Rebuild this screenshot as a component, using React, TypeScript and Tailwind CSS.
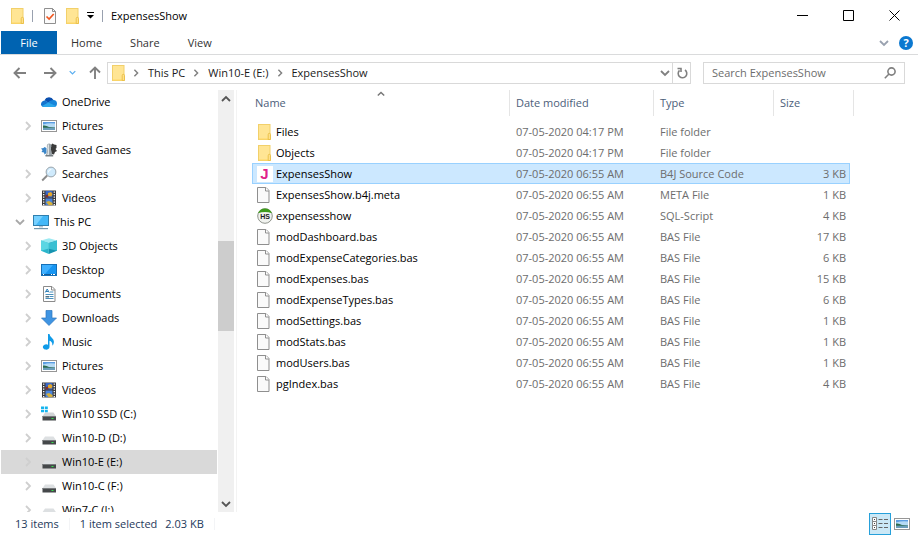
import { Fragment, useState } from "react";
import type { ReactNode } from "react";
import clsx from "clsx";

/* ---------- Icons ---------- */

const FolderIcon = () => (
  <svg viewBox="0 0 14 16" className="h-4 w-3.5 shrink-0">
    <rect x="1.500" y=".5" width="11.500" height="15" fill="#ffe594" stroke="#f2d06a" />
    <path d="M2 15h10" stroke="#ffd766" />
    <path d="M11.200 15.500v-5a1.100 1.100 0 0 1 2.300 0v5z" fill="#ffe08a" stroke="#e9be45" strokeWidth=".9" />
  </svg>
);

const FileIcon = () => (
  <svg viewBox="0 0 16 16" className="h-4 w-4 shrink-0">
    <path d="M.5.5h8.500l3 3v12H.5z" fill="#fafafa" stroke="#8f8f8f" />
    <path d="M8.500 .5v3.500H12" fill="#fff" stroke="#8f8f8f" />
  </svg>
);

const PropertiesIcon = () => (
  <svg viewBox="0 0 16 16" className="h-4 w-4 shrink-0">
    <path d="M3.500 .5h8l3 3v12h-11z" fill="#fbfbfb" stroke="#8f8f8f" />
    <path d="M11.500 .5v3h3" fill="none" stroke="#8f8f8f" />
    <path d="M5.500 8.500l2.600 2.500 4.600-5" fill="none" stroke="#f0561f" strokeWidth="1.700" />
  </svg>
);

const B4JIcon = () => (
  <svg viewBox="0 0 16 16" className="h-4 w-4 shrink-0">
    <rect width="16" height="16" fill="#fff" />
    <text x="7.500" y="13" textAnchor="middle" fontSize="15" fontWeight="700" fontFamily="Liberation Sans, sans-serif" fill="#e0218a">
      J
    </text>
  </svg>
);

const HeidiIcon = () => (
  <svg viewBox="0 0 16 16" className="h-4 w-4 shrink-0">
    <circle cx="8" cy="8" r="7.300" fill="#f1f3ef" stroke="#8f938c" />
    <path d="M1 5.200a7.500 7.500 0 0 1 14 0q-7-2.500-14 0z" fill="#3e9b1c" />
    <text x="8" y="10.500" textAnchor="middle" fontSize="7" fontWeight="700" fontFamily="Liberation Sans, sans-serif" fill="#222">
      HS
    </text>
  </svg>
);

const OneDriveIcon = () => (
  <svg viewBox="0 0 16 16" className="h-4 w-4 shrink-0">
    <path d="M3.500 6.200A5 5 0 0 1 12.500 6l-3 4z" fill="#0a4fae" />
    <path d="M0 10.300a3.700 3.700 0 0 1 5-3.600l6 4.800-8 1.500A3 3 0 0 1 0 10.300z" fill="#1373ce" />
    <path d="M12.500 6A3.600 3.600 0 0 1 16 9.500q0 3.500-3.400 3.500L7 8.500q2-2.800 5.500-2.500z" fill="#1685da" />
    <path d="M1 12l6.300-3.500L15 12q-1 1-2.400 1H3.300Q1.800 13 1 12z" fill="#2aa6ea" />
  </svg>
);

const PicturesIcon = () => (
  <svg viewBox="0 0 16 16" className="h-4 w-4 shrink-0">
    <rect x=".5" y="2.500" width="15" height="11" fill="#fff" stroke="#969696" />
    <path d="M2 4h12v8H2z" fill="#b5daf5" />
    <path d="M2 4h12v1.500q-6-1-12 1z" fill="#5b9de2" />
    <path d="M2 7.500q3-.5 6 1.500l6 .5V10H2z" fill="#2c6b4d" />
    <path d="M2 9.700h12V12H2z" fill="#6a9dba" />
  </svg>
);

const SavedGamesIcon = () => (
  <svg viewBox="0 0 16 16" className="h-4 w-4 shrink-0">
    <path d="M9.500 3.500l2-2 1.500 1 2.500.5v3l-1 1 1.500 2-2 1-1 2.500-2.500-.5z" fill="#3a3a3a" />
    <path d="M0 6.500l2.500-.5 1-1 2 1v5l-2 1.500-.5-2-2.500-.5 1-1.800z" fill="#3b86c8" />
    <path d="M8 1.500a2.400 2.400 0 0 1 1.700 4.200L10.500 11l1.500 3H4.500l1.300-3 .8-5.300A2.400 2.400 0 0 1 8 1.500z" fill="#9aa3a8" />
    <path d="M7.200 2.500a2 2 0 0 0 0 3L6.500 12l-.8 1.500H8V2.300z" fill="#dfe4e6" />
    <path d="M4.500 13h7.700v1.500H4.500z" fill="#777f83" />
  </svg>
);

const SearchesIcon = () => (
  <svg viewBox="0 0 16 16" className="h-4 w-4 shrink-0">
    <path d="M1.200 14.500l5-5" stroke="#8b8b8b" strokeWidth="1.900" />
    <circle cx="10" cy="6" r="4.900" fill="#cfeafc" stroke="#9aa4ab" />
    <path d="M7.300 6.500a3 3 0 0 1 3-3" fill="none" stroke="#fff" />
  </svg>
);

const VideosIcon = () => (
  <svg viewBox="0 0 16 16" className="h-4 w-4 shrink-0">
    <path d="M1 .5h14v15H1z" fill="#3a3a3c" />
    <path d="M4.500 1h7v6.500h-7z" fill="#3767c8" />
    <path d="M4.500 8.500h7V15h-7z" fill="#4a84dd" />
    <path d="M7 3l3-1 1.500 2-1 2.500L7 6z" fill="#e6a828" />
    <path d="M4.500 5l2.500-.5.500 3h-3z" fill="#7f332e" />
    <path d="M5 12l3-1 3.500 2v2h-4z" fill="#d6b03a" />
    <path d="M2.700 1.500v14M13.300 1.500v14" stroke="#fff" strokeWidth="1.300" strokeDasharray="1.300 1.200" />
  </svg>
);

const ComputerIcon = () => (
  <svg viewBox="0 0 16 16" className="h-4 w-4 shrink-0">
    <rect x=".5" y="1.500" width="15" height="10" fill="#43b8f8" stroke="#2f7fae" />
    <path d="M1 2h9L3 11H1z" fill="#76d0ff" />
    <path d="M6 12h4v1.500H6z" fill="#b5c7d1" />
    <path d="M1 14h14v1.200H1z" fill="#7297ad" />
  </svg>
);

const ObjectsIcon = () => (
  <svg viewBox="0 0 16 16" className="h-4 w-4 shrink-0">
    <path d="M0 2.500L8 .3l8 2.200-8 2.600z" fill="#9beaf2" />
    <path d="M0 2.500l7.800 2.600V16L0 12.700z" fill="#2ab5cb" />
    <path d="M7.800 5.100L16 2.500v10.200L7.800 16z" fill="#1593b0" />
    <path d="M0 2.500l7.800 2.600v5.500L0 12.700z" fill="#5bd6e3" />
    <path d="M7.800 5.100L16 2.500v10.200l-8.200-2z" fill="#39bfd2" />
  </svg>
);

const DesktopIcon = () => (
  <svg viewBox="0 0 16 16" className="h-4 w-4 shrink-0">
    <rect x=".5" y="2.500" width="15" height="11" fill="#1795f2" stroke="#1570b8" />
    <path d="M1 3h11L4 12H1z" fill="#3fb0ff" />
    <path d="M1 12h14v1H1z" fill="#125c9a" />
    <path d="M2 12.500h1M10 12.500h1M12 12.500h2" stroke="#fff" />
  </svg>
);

const DocumentsIcon = () => (
  <svg viewBox="0 0 16 16" className="h-4 w-4 shrink-0">
    <path d="M2.500 .5h8.500l3 3v12H2.500z" fill="#fff" stroke="#8b8b8b" />
    <path d="M10.500 .5v3.500H14" fill="none" stroke="#8b8b8b" />
    <path d="M4.200 6.500l2-3.500 2 3.500M5 5.500h2.500" fill="none" stroke="#2c7db5" />
    <path d="M9 6h3.300M4.500 8.500h8M8.500 10.500h4M4.500 12.500h8" stroke="#4a90bd" />
    <path d="M4.500 10h3.500v1.500H4.500z" fill="#56717f" />
  </svg>
);

const DownloadsIcon = () => (
  <svg viewBox="0 0 16 16" className="h-4 w-4 shrink-0">
    <path d="M5 .5h6v7.500h4.500L8 15.500.5 8H5z" fill="#3f94e2" stroke="#2b75bd" strokeWidth=".7" />
  </svg>
);

const MusicIcon = () => (
  <svg viewBox="0 0 16 16" className="h-4 w-4 shrink-0">
    <path d="M7 0h1.500q.2 2.400 2.500 4 3 2.400 1.300 6.500l-1 1.200q.4-4.200-2.800-5V13a3.300 2.700 0 1 1-1.500-2.300z" fill="#109be8" />
  </svg>
);

const DriveIcon = ({ system = false }: { system?: boolean }) => (
  <svg viewBox="0 0 16 16" className="h-4 w-4 shrink-0">
    <path d="M4 6.500h8.500L15 10.200H1.500z" fill={system ? "#d1d4d6" : "#dde0e2"} />
    <rect x="1.500" y="10" width="13.500" height="4.500" fill="#45484a" />
    <path d="M1.500 10h13.500v1H1.500z" fill="#777a7c" />
    <rect x="10.500" y="12" width="2" height="1" fill="#34e34c" />
    {system && <path d="M0 .5h3v2.500H0zM3.800.5h3v2.500h-3zM0 3.800h3v2.500H0zM3.800 3.800h3v2.500h-3z" fill="#15b4ee" />}
  </svg>
);

type Direction = "right" | "down" | "up";

const chevronPaths: Record<Direction, string> = {
  right: "M3 1l4 4-4 4",
  down: "M1 3l4 4 4-4",
  up: "M1 7l4-4 4 4",
};

const Chevron = ({ to, className }: { to: Direction; className?: string }) => (
  <svg viewBox="0 0 10 10" className={clsx("shrink-0", className)} fill="none" stroke="currentColor" strokeWidth="1.800">
    <path d={chevronPaths[to]} />
  </svg>
);

const Arrow = ({ d }: { d: string }) => (
  <svg viewBox="0 0 14 14" className="h-3.5 w-3.5" fill="none" stroke="currentColor" strokeWidth="1.900">
    <path d={d} />
  </svg>
);

/* ---------- Data ---------- */

type TreeItem = {
  name: string;
  icon: ReactNode;
  root?: boolean;
  leaf?: boolean;
};

const treeItems: TreeItem[] = [
  { name: "OneDrive", icon: <OneDriveIcon />, leaf: true },
  { name: "Pictures", icon: <PicturesIcon /> },
  { name: "Saved Games", icon: <SavedGamesIcon />, leaf: true },
  { name: "Searches", icon: <SearchesIcon /> },
  { name: "Videos", icon: <VideosIcon /> },
  { name: "This PC", icon: <ComputerIcon />, root: true },
  { name: "3D Objects", icon: <ObjectsIcon /> },
  { name: "Desktop", icon: <DesktopIcon /> },
  { name: "Documents", icon: <DocumentsIcon /> },
  { name: "Downloads", icon: <DownloadsIcon /> },
  { name: "Music", icon: <MusicIcon /> },
  { name: "Pictures", icon: <PicturesIcon /> },
  { name: "Videos", icon: <VideosIcon /> },
  { name: "Win10 SSD (C:)", icon: <DriveIcon system /> },
  { name: "Win10-D (D:)", icon: <DriveIcon /> },
  { name: "Win10-E (E:)", icon: <DriveIcon /> },
  { name: "Win10-C (F:)", icon: <DriveIcon /> },
  { name: "Win7-C (I:)", icon: <DriveIcon /> },
];

const MORNING = "07-05-2020 06:55 AM";
const AFTERNOON = "07-05-2020 04:17 PM";

type FileRow = {
  name: string;
  date: string;
  type: string;
  size: string;
  icon?: ReactNode;
};

const files: FileRow[] = [
  { name: "Files", date: AFTERNOON, type: "File folder", size: "", icon: <FolderIcon /> },
  { name: "Objects", date: AFTERNOON, type: "File folder", size: "", icon: <FolderIcon /> },
  { name: "ExpensesShow", date: MORNING, type: "B4J Source Code", size: "3 KB", icon: <B4JIcon /> },
  { name: "ExpensesShow.b4j.meta", date: MORNING, type: "META File", size: "1 KB" },
  { name: "expensesshow", date: MORNING, type: "SQL-Script", size: "4 KB", icon: <HeidiIcon /> },
  { name: "modDashboard.bas", date: MORNING, type: "BAS File", size: "17 KB" },
  { name: "modExpenseCategories.bas", date: MORNING, type: "BAS File", size: "6 KB" },
  { name: "modExpenses.bas", date: MORNING, type: "BAS File", size: "15 KB" },
  { name: "modExpenseTypes.bas", date: MORNING, type: "BAS File", size: "6 KB" },
  { name: "modSettings.bas", date: MORNING, type: "BAS File", size: "1 KB" },
  { name: "modStats.bas", date: MORNING, type: "BAS File", size: "1 KB" },
  { name: "modUsers.bas", date: MORNING, type: "BAS File", size: "1 KB" },
  { name: "pgIndex.bas", date: MORNING, type: "BAS File", size: "4 KB" },
];

const crumbs = ["This PC", "Win10-E (E:)", "ExpensesShow"];

/* ---------- Sections ---------- */

const TitleBar = () => (
  <header className="flex h-[31px] shrink-0 items-center pl-2.5">
    <FolderIcon />
    <span className="ml-2 h-3 w-px bg-gray-400" />
    <button aria-label="Properties" className="ml-2">
      <PropertiesIcon />
    </button>
    <button aria-label="New folder" className="ml-2">
      <FolderIcon />
    </button>
    <button aria-label="Customize Quick Access Toolbar" className="ml-2">
      <svg viewBox="0 0 7 7" className="h-[7px] w-[7px]">
        <path d="M0 0h7v1H0zM0 3h7L3.500 6.500z" />
      </svg>
    </button>
    <span className="ml-2 h-3 w-px bg-gray-400" />
    <h1 className="ml-2 flex-1">ExpensesShow</h1>
    <div className="flex self-stretch pr-px">
      {[
        ["Minimize", "M0 5.500h11"],
        ["Maximize", "M.5.5h10v10H.5z"],
        ["Close", "M.5.5l10 10M10.500.5l-10 10"],
      ].map(([label, d]) => (
        <button key={label} aria-label={label} className="flex w-[46px] items-center justify-center hover:bg-gray-200">
          <svg viewBox="0 0 11 11" className="h-[11px] w-[11px]" fill="none" stroke="#000">
            <path d={d} />
          </svg>
        </button>
      ))}
    </div>
  </header>
);

const RibbonTabs = () => (
  <nav className="flex h-6 shrink-0 items-center border-b border-[#dadbdc] pl-px">
    <button className="w-14 self-stretch bg-[#0063b1] text-white">File</button>
    <div className="flex flex-1 gap-7 pl-3.5 text-[#333]">
      <button>Home</button>
      <button>Share</button>
      <button>View</button>
    </div>
    <button aria-label="Expand the Ribbon" className="mr-2.5 text-gray-400">
      <Chevron to="down" className="h-2.5 w-2.5" />
    </button>
    <button
      aria-label="Help"
      className="mr-[5px] flex h-3.5 w-3.5 items-center justify-center rounded-full bg-[#0b78d0] text-[11px] font-bold text-white"
    >
      ?
    </button>
  </nav>
);

const AddressRow = () => (
  <div className="flex h-[35px] shrink-0 items-center px-[13px] text-[#808080]">
    <button aria-label="Back">
      <Arrow d="M13 7H1.500M6.500 2l-5 5 5 5" />
    </button>
    <button aria-label="Forward" className="ml-4">
      <Arrow d="M1 7h11.500M7.500 2l5 5-5 5" />
    </button>
    <button aria-label="Recent locations" className="ml-3 text-[#5aaef0]">
      <Chevron to="down" className="h-[7px] w-[7px]" />
    </button>
    <button aria-label="Up" className="ml-3">
      <Arrow d="M7 13V1.500M2 6.500l5-5 5 5" />
    </button>

    <div className="ml-[5px] flex h-[22px] flex-1 items-center border border-[#d9d9d9] pl-[3px]">
      <FolderIcon />
      {crumbs.map((crumb) => (
        <Fragment key={crumb}>
          <Chevron to="right" className="mr-2 ml-[7px] h-2 w-2" />
          <button className="text-[#1a1a1a]">{crumb}</button>
        </Fragment>
      ))}
      <button aria-label="Previous locations" className="ml-auto px-0.5">
        <Chevron to="down" className="h-2.5 w-2.5" />
      </button>
      <button aria-label="Refresh" className="flex w-[18px] items-center justify-center self-stretch border-l border-[#d9d9d9]">
        <svg viewBox="0 0 12 12" className="h-3 w-3" fill="none" stroke="currentColor" strokeWidth="1.600">
          <path d="M9 3a4.300 4.300 0 1 1-5.500.4M1.500 1.500H5V5" />
        </svg>
      </button>
    </div>

    <div className="ml-3 flex h-[22px] w-[202px] items-center border border-[#d9d9d9] px-2">
      <input
        type="text"
        aria-label="Search ExpensesShow"
        placeholder="Search ExpensesShow"
        className="min-w-0 flex-1 outline-none placeholder:text-[#6d6d6d]"
      />
      <svg viewBox="0 0 12 12" className="h-3 w-3" fill="none" stroke="currentColor" strokeWidth="1.600">
        <circle cx="7.500" cy="4.500" r="3.600" />
        <path d="M5 7L.8 11.200" />
      </svg>
    </div>
  </div>
);

const NavigationPane = () => (
  <aside className="flex w-[237px] shrink-0 border-r border-[#f3f3f3]">
    <ul className="flex-1 overflow-hidden pl-px">
      {treeItems.map((item, i) => (
        <li key={i}>
          <button
            className={clsx(
              "flex h-6 w-full items-center",
              item.root ? "pl-3.5" : "pl-[22px]",
              item.name === "Win10-E (E:)" && "bg-[#d9d9d9]"
            )}
          >
            <Chevron
              to={item.root ? "down" : "right"}
              className={clsx("mr-2 h-2.5 w-2.5", item.root ? "text-[#a8a8a8]" : "text-[#cfcfcf]", item.leaf && "invisible")}
            />
            {item.icon}
            <span className="ml-[5px] whitespace-nowrap">{item.name}</span>
          </button>
        </li>
      ))}
    </ul>

    {/* Scrollbar */}
    <div className="mr-0.5 ml-px flex w-4 flex-col bg-[#f0f0f0] text-[#555]">
      <button aria-label="Scroll up" className="flex h-[17px] items-center justify-center">
        <Chevron to="up" className="h-2.5 w-2.5" />
      </button>
      <div className="flex-[134]" />
      <div className="flex-[90] bg-[#cdcdcd]" />
      <div className="flex-[164]" />
      <button aria-label="Scroll down" className="flex h-[17px] items-center justify-center">
        <Chevron to="down" className="h-2.5 w-2.5" />
      </button>
    </div>
  </aside>
);

const FileTable = () => {
  const [selected, setSelected] = useState("ExpensesShow");

  return (
    <table className="table-fixed border-separate border-spacing-0 text-left">
      <colgroup>
        <col className="w-[258px]" />
        <col className="w-36" />
        <col className="w-[120px]" />
        <col className="w-[76px]" />
        <col className="w-1" />
      </colgroup>
      <thead className="text-[#4c607a]">
        <tr className="h-[26px]">
          <th className="relative border-r border-[#e5e5e5] pl-[3px] font-normal">
            Name
            <Chevron to="up" className="absolute top-0 left-1/2 h-2 w-2 -translate-x-1/2 text-[#777]" />
          </th>
          <th className="border-r border-[#e5e5e5] pl-1.5 font-normal">Date modified</th>
          <th className="border-r border-[#e5e5e5] pl-1.5 font-normal">Type</th>
          <th colSpan={2} className="border-r border-[#e5e5e5] pl-1.5 font-normal">Size</th>
        </tr>
        <tr className="h-[5px]" />
      </thead>
      <tbody className="text-[#6d6d6d]">
        {files.map((file) => {
          const active = file.name === selected;
          const cell = active ? "border-y border-[#99d1ff] bg-[#cce8ff]" : "border-y border-transparent";
          return (
            <tr key={file.name} className="h-[21px]" onClick={() => setSelected(file.name)}>
              <td className={clsx(cell, "border-l p-0 text-black")}>
                <div className="flex items-center pl-1">
                  <span className="flex w-[19px] justify-start">{file.icon ?? <FileIcon />}</span>
                  {file.name}
                </div>
              </td>
              <td className={clsx(cell, "py-0 pr-0 pl-1.5")}>{file.date}</td>
              <td className={clsx(cell, "py-0 pr-0 pl-1.5")}>{file.type}</td>
              <td className={clsx(cell, "border-r py-0 pr-[3px] pl-0 text-right")}>{file.size}</td>
            </tr>
          );
        })}
      </tbody>
    </table>
  );
};

const StatusBar = () => (
  <footer className="flex h-6 shrink-0 items-center pr-2 pl-[15px] text-[#1e395b]">
    <span>13 items</span>
    <span className="ml-2.5 h-3 w-px bg-gray-100" />
    <span className="ml-2.5">1 item selected</span>
    <span className="ml-2">2.03 KB</span>
    <span className="ml-2.5 h-3 w-px bg-gray-100" />
    <button
      aria-label="Details view"
      className="ml-auto flex h-[22px] w-[22px] items-center justify-center border border-[#26a0da] bg-[#cbe8f6]"
    >
      <svg viewBox="0 0 16 14" className="h-3.5 w-4">
        <path d="M.5.5h4v4h-4zM.5 4.500h4v4h-4zM.5 8.500h4v4h-4z" fill="#fff" stroke="#858585" />
        <path d="M2 2.500h1M2 6.500h1M2 10.500h1" stroke="#444" />
        <path d="M6.500 2.500h4M12 2.500h4M6.500 6.500h4M12 6.500h4M6.500 10.500h4M12 10.500h4" stroke="#666" />
      </svg>
    </button>
    <button aria-label="Large icons view" className="ml-[3px]">
      <PicturesIcon />
    </button>
  </footer>
);

export default function App() {
  return (
    <div className="flex h-screen flex-col overflow-hidden bg-white font-['Open_Sans','Noto_Sans',sans-serif] text-[11px] leading-4 text-black">
      <TitleBar />
      <RibbonTabs />
      <AddressRow />
      <main className="flex min-h-0 flex-1">
        <NavigationPane />
        <section className="min-w-0 flex-1 overflow-hidden pl-[15px]">
          <FileTable />
        </section>
      </main>
      <StatusBar />
    </div>
  );
}
